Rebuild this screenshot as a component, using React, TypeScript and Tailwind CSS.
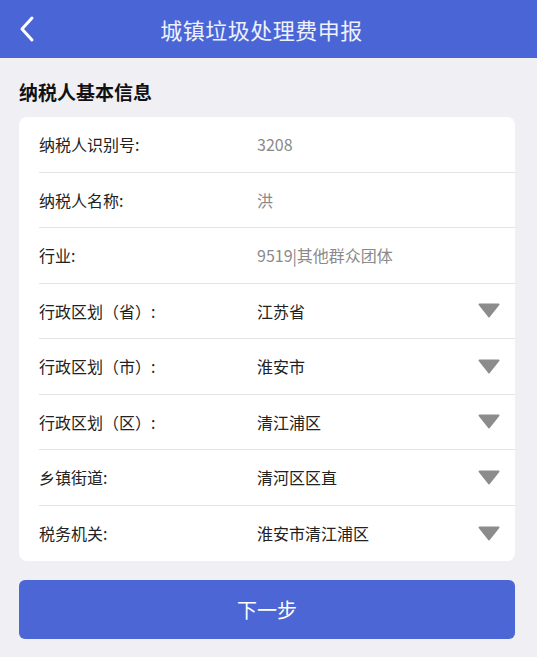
import React from "react";

const rows: { label: string; value: string; select?: boolean }[] = [
  { label: "纳税人识别号:", value: "3208" },
  { label: "纳税人名称:", value: "洪" },
  { label: "行业:", value: "9519|其他群众团体" },
  { label: "行政区划（省）:", value: "江苏省", select: true },
  { label: "行政区划（市）:", value: "淮安市", select: true },
  { label: "行政区划（区）:", value: "清江浦区", select: true },
  { label: "乡镇街道:", value: "清河区区直", select: true },
  { label: "税务机关:", value: "淮安市清江浦区", select: true },
];

export default function App() {
  return (
    <div
      className="w-[537px] h-[657px] bg-[#f0eff4] overflow-hidden"
      style={{ fontFamily: '"Noto Sans CJK SC", "Noto Sans", sans-serif' }}
    >
      <div className="relative h-[58px] bg-[#4a66d6] flex items-center justify-center pr-[14px]">
        <svg
          className="absolute left-[18px] top-[15px]"
          width="18"
          height="28"
          viewBox="0 0 18 28"
          fill="none"
        >
          <path d="M14 3 L4 14 L14 25" stroke="#ffffff" strokeWidth="3" strokeLinecap="round" strokeLinejoin="round" />
        </svg>
        <span className="text-[22px] text-[#eef1ff] tracking-[0.5px]">城镇垃圾处理费申报</span>
      </div>
      <div className="pl-[19px] pr-[22px]">
        <div className="h-[59px] flex items-center pt-[10px] text-[19px] font-bold text-[#111]">
          纳税人基本信息
        </div>
        <div className="bg-white rounded-[8px]">
          {rows.map((r, i) => (
            <div key={i} className="pl-[20px]">
              <div
                className={`h-[55.5px] flex items-center ${i < rows.length - 1 ? "border-b border-[#e4e4e6]" : ""}`}
              >
                <div className="w-[218px] text-[16px] text-[#222]">{r.label}</div>
                <div className={`flex-1 text-[16px] ${r.select ? "text-[#222]" : "text-[#8a8a8a]"}`}>{r.value}</div>
                {r.select && (
                  <svg className="mr-[15px]" width="22" height="15" viewBox="0 0 22 15">
                    <path d="M1.5 1.5 L20.5 1.5 L11 13.5 Z" fill="#8c8c8c" stroke="#8c8c8c" strokeWidth="2" strokeLinejoin="round" />
                  </svg>
                )}
              </div>
            </div>
          ))}
        </div>
        <button className="mt-[19px] w-full h-[59px] rounded-[6px] bg-[#4c66d6] text-white text-[20px] flex items-center justify-center">
          下一步
        </button>
      </div>
    </div>
  );
}
